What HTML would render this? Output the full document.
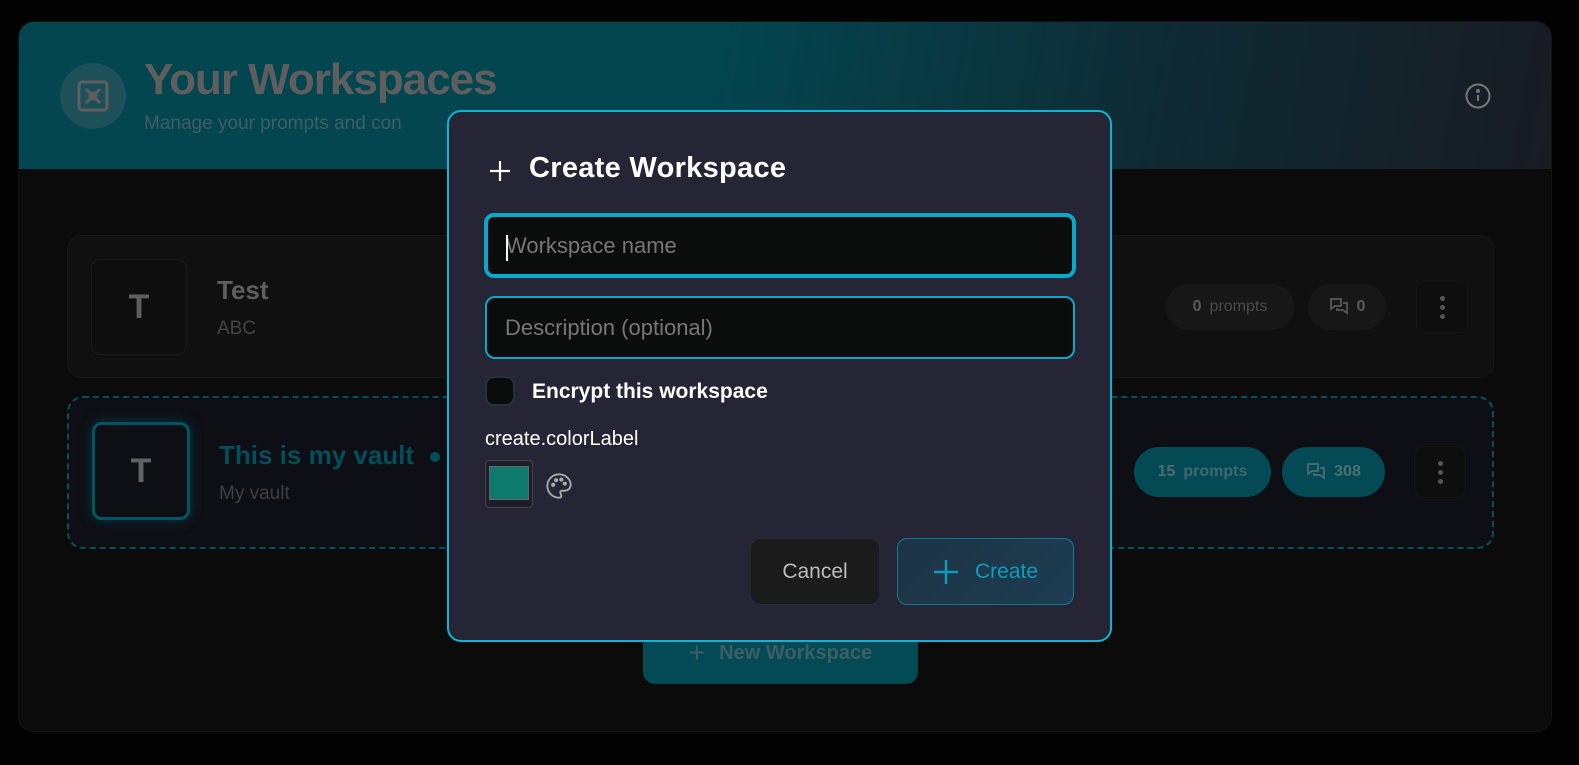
<!DOCTYPE html>
<html><head><meta charset="utf-8"><style>
*{box-sizing:border-box;margin:0;padding:0}
body{width:1579px;height:765px;background:#030303;font-family:"Liberation Sans",sans-serif;position:relative;overflow:hidden}
.abs{position:absolute}
.cont{left:18px;top:21px;width:1534px;height:711px;border-radius:16px;background:#0b0b0b;border:1px solid #141414;overflow:hidden}
.hdr{left:0;top:0;width:1534px;height:147px;background:linear-gradient(100deg,#03464f 0%,#034650 45%,#0f2a33 75%,#181b22 100%)}
.card{border-radius:14px}
.pill{border-radius:22px;height:46px;display:flex;align-items:center;justify-content:center;font-weight:bold;font-size:16px;gap:8px}
.dots{width:52px;height:52px;border-radius:8px;background:#0e0e0e;border:1px solid #151515;display:flex;flex-direction:column;align-items:center;justify-content:center;gap:4px}
.dots i{width:5px;height:5px;border-radius:50%;background:#555;display:block}
.modal{left:447px;top:110px;width:665px;height:532px;background:#252536;border:2.5px solid #0fb5d6;border-radius:14px}
.inp{background:#0b0c0c;border-radius:10px;position:absolute;color:#777;font-size:22px;display:flex;align-items:center;padding-left:18px}
</style></head><body>
<div class="abs cont">
 <div class="abs hdr"></div>
 <div class="abs" style="left:41px;top:41px;width:66px;height:66px;border-radius:50%;background:#1d5059"></div>
 <svg class="abs" style="left:57px;top:57px" width="34" height="34" viewBox="0 0 34 34" fill="none" stroke="#5e5e5e" stroke-width="3"><rect x="3" y="3" width="28" height="28" rx="3"/><path d="M10 10l14 14M24 10L10 24"/><circle cx="17" cy="17" r="3"/></svg>
 <div class="abs" style="left:125px;top:33px;font-size:44px;font-weight:bold;color:#5e5e5e;letter-spacing:-1px">Your Workspaces</div>
 <div class="abs" style="left:125px;top:91px;font-size:19px;color:#3d5e63">Manage your prompts and con</div>
 <svg class="abs" style="left:1446px;top:61px" width="26" height="26" viewBox="0 0 26 26" fill="none" stroke="#777" stroke-width="2"><circle cx="13" cy="13" r="11.5"/><path d="M13 12v6"/><circle cx="13" cy="8" r="1" fill="#777"/></svg>

 <div class="abs card" style="left:48px;top:213px;width:1427px;height:143px;background:#101010;border:1px solid #161616"></div>
 <div class="abs" style="left:72px;top:237px;width:96px;height:96px;border-radius:10px;border:1px solid #1a1a1a;background:#0e0e0e;color:#5e5e5e;font-size:34px;font-weight:bold;display:flex;align-items:center;justify-content:center">T</div>
 <div class="abs" style="left:198px;top:253px;font-size:26px;font-weight:bold;color:#5e5e5e">Test</div>
 <div class="abs" style="left:198px;top:296px;font-size:19px;color:#444">ABC</div>
 <div class="abs pill" style="left:1147px;top:262px;width:128px;background:#171717;color:#5a5a5a">0 <span style="font-weight:normal;color:#4a4a4a">prompts</span></div>
 <div class="abs pill" style="left:1289px;top:262px;width:78px;background:#171717;color:#5a5a5a"><svg width="20" height="20" viewBox="0 0 20 20" fill="none" stroke="#5a5a5a" stroke-width="1.7"><path d="M2 2h10v7H6l-4 3zM8 11v2h6l4 3V6h-4"/></svg>0</div>
 <div class="abs dots" style="left:1397px;top:259px"><i></i><i></i><i></i></div>

 <div class="abs card" style="left:48px;top:374px;width:1427px;height:153px;background:#0e0f14;border:2.5px dashed #03505c;border-radius:16px"></div>
 <div class="abs" style="left:73px;top:400px;width:98px;height:98px;border-radius:10px;border:3px solid #045563;background:#0e0f14;color:#626262;font-size:34px;font-weight:bold;display:flex;align-items:center;justify-content:center;box-shadow:0 0 12px #033a44">T</div>
 <div class="abs" style="left:200px;top:418px;font-size:26px;font-weight:bold;color:#034e5a">This is my vault</div>
 <div class="abs" style="left:411px;top:430px;width:10px;height:10px;border-radius:50%;background:#034e5a"></div>
 <div class="abs" style="left:200px;top:461px;font-size:19px;color:#3e3e44">My vault</div>
 <div class="abs pill" style="left:1115px;top:425px;width:137px;height:50px;border-radius:25px;background:#034a55;color:#4a6e74">15 <span style="color:#3e6970">prompts</span></div>
 <div class="abs pill" style="left:1263px;top:425px;width:103px;height:50px;border-radius:25px;background:#034a55;color:#4a6e74"><svg width="20" height="20" viewBox="0 0 20 20" fill="none" stroke="#4a6e74" stroke-width="1.7"><path d="M2 2h10v7H6l-4 3zM8 11v2h6l4 3V6h-4"/></svg>308</div>
 <div class="abs dots" style="left:1395px;top:424px"><i></i><i></i><i></i></div>

 <div class="abs" style="left:624px;top:600px;width:275px;height:62px;border-radius:12px;background:#034a55;color:#3d5e63;font-size:20px;font-weight:bold;display:flex;align-items:center;justify-content:center;gap:14px"><span style="font-size:28px;font-weight:normal">+</span>New Workspace</div>
</div>

<div class="abs modal">
 <svg class="abs" style="left:39px;top:47px" width="24" height="24" viewBox="0 0 24 24" stroke="#fff" stroke-width="2.2"><path d="M12 2v20M2 12h20"/></svg>
 <div class="abs" style="left:80px;top:40px;font-size:29px;font-weight:bold;color:#fff;letter-spacing:0.3px">Create Workspace</div>
 <div class="inp" style="left:35px;top:101px;width:592px;height:65px;border:4px solid #0aa9cc">Workspace name<span class="abs" style="left:18px;top:18px;width:2px;height:26px;background:#fff"></span></div>
 <div class="inp" style="left:36px;top:184px;width:590px;height:63px;border:2px solid #0aa9cc">Description (optional)</div>
 <div class="abs" style="left:36px;top:264px;width:30px;height:30px;border-radius:9px;background:#0b0c0c;border:2px solid #22323a"></div>
 <div class="abs" style="left:83px;top:268px;font-size:21px;font-weight:bold;color:#fff">Encrypt this workspace</div>
 <div class="abs" style="left:36px;top:316px;font-size:20px;color:#fff">create.colorLabel</div>
 <div class="abs" style="left:36px;top:348px;width:48px;height:48px;border-radius:4px;border:1px solid #444;background:#1e1e2a"><div style="margin:5px 0 0 3px;width:40px;height:34px;background:#0e7a6e;border:1px solid #666"></div></div>
 <svg class="abs" style="left:96px;top:360px" width="28" height="28" viewBox="0 0 24 24" fill="none" stroke="#aaa" stroke-width="1.6"><path d="M12 2a10 10 0 0 0 0 20c1.5 0 2-1 2-2s-1-1.5-1-2.5 1-1.5 2-1.5h2a5 5 0 0 0 5-5c0-5-4.5-9-10-9z"/><circle cx="7" cy="11" r="1" fill="#aaa"/><circle cx="9.5" cy="7" r="1" fill="#aaa"/><circle cx="14" cy="6.5" r="1" fill="#aaa"/><circle cx="17" cy="10" r="1" fill="#aaa"/></svg>
 <div class="abs" style="left:301px;top:426px;width:130px;height:67px;border-radius:10px;background:#1b1b1b;border:1px solid #2a2a34;color:#bbb;font-size:21px;display:flex;align-items:center;justify-content:center">Cancel</div>
 <div class="abs" style="left:448px;top:426px;width:177px;height:67px;border-radius:10px;background:linear-gradient(135deg,#1d3444,#1d3d52);border:1px solid #0b7d99;color:#0e9cbb;font-size:21px;display:flex;align-items:center;justify-content:center;gap:16px"><svg width="26" height="26" viewBox="0 0 26 26" stroke="#0e9cbb" stroke-width="2.4"><path d="M13 1v24M1 13h24"/></svg>Create</div>
</div>
</body></html>
